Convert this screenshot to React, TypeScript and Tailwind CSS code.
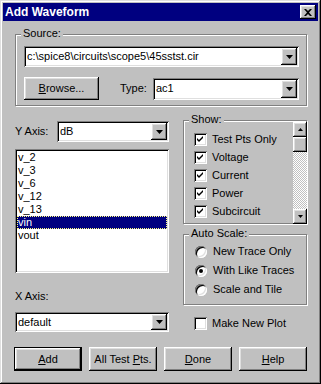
import React from "react";

const raised =
  "shadow-[inset_-1px_-1px_0_#000,inset_1px_1px_0_#fff,inset_-2px_-2px_0_#808080,inset_2px_2px_0_#dfdfdf]";
const sunken =
  "shadow-[inset_1px_1px_0_#808080,inset_-1px_-1px_0_#fff,inset_2px_2px_0_#000,inset_-2px_-2px_0_#dfdfdf]";
const etched = "border border-[#808080] shadow-[inset_1px_1px_0_#fff,1px_1px_0_#fff]";

function DownArrow() {
  return (
    <svg width="7" height="4" viewBox="0 0 7 4">
      <polygon points="0,0 7,0 3.5,4" fill="#000" />
    </svg>
  );
}

function Combo({ value, className }: { value: string; className: string }) {
  return (
    <div className={`flex items-stretch bg-white p-[2px] ${sunken} ${className}`}>
      <span className="flex-1 flex items-center pl-[1px] whitespace-nowrap overflow-hidden">{value}</span>
      <div className={`w-[16px] flex items-center justify-center bg-[#c0c0c0] ${raised}`}>
        <DownArrow />
      </div>
    </div>
  );
}

function Button({ children, isDefault }: { children: React.ReactNode; isDefault?: boolean }) {
  if (isDefault) {
    return (
      <div className="w-[68px] h-[24px] border border-black flex">
        <div className={`flex-1 flex items-center justify-center ${raised}`}>{children}</div>
      </div>
    );
  }
  return (
    <div className={`w-[68px] h-[24px] flex items-center justify-center ${raised}`}>{children}</div>
  );
}

function Check({ checked }: { checked: boolean }) {
  return (
    <div className={`w-[13px] h-[13px] bg-white flex items-center justify-center ${sunken}`}>
      {checked && (
        <svg width="7" height="7" viewBox="0 0 7 7">
          <path d="M0 2 L2 4 L6 0 L6 2 L2 6 L0 4 Z" fill="#000" />
        </svg>
      )}
    </div>
  );
}

function Radio({ checked }: { checked: boolean }) {
  return (
    <div className={`w-[12px] h-[12px] rounded-full bg-white flex items-center justify-center ${sunken}`}>
      {checked && <div className="w-[4px] h-[4px] rounded-full bg-black" />}
    </div>
  );
}

function Group({ label, className, children }: { label: string; className: string; children?: React.ReactNode }) {
  return (
    <div className={`relative ${etched} ${className}`}>
      <span className="absolute -top-[8px] left-[5px] px-[2px] bg-[#c0c0c0] leading-[13px]">{label}</span>
      {children}
    </div>
  );
}

const signals = ["v_2", "v_3", "v_6", "v_12", "v_13", "vin", "vout"];
const shows = ["Test Pts Only", "Voltage", "Current", "Power", "Subcircuit"];
const scales = ["New Trace Only", "With Like Traces", "Scale and Tile"];

export default function App() {
  return (
    <div
      className={`w-[321px] h-[384px] bg-[#c0c0c0] p-[3px] flex flex-col text-black text-[11px] font-['Liberation_Sans',Arial,sans-serif] shadow-[inset_-1px_-1px_0_#000,inset_1px_1px_0_#dfdfdf,inset_-2px_-2px_0_#808080,inset_2px_2px_0_#fff]`}
    >
      <div className="h-[18px] bg-[#000080] flex items-center justify-between pl-[2px] pr-[2px]">
        <span className="text-white font-bold text-[12px]">Add Waveform</span>
        <div className={`w-[16px] h-[14px] bg-[#c0c0c0] flex items-center justify-center ${raised}`}>
          <svg width="8" height="7" viewBox="0 0 8 7">
            <path d="M0 0 L2 0 L4 2 L6 0 L8 0 L5 3.5 L8 7 L6 7 L4 5 L2 7 L0 7 L3 3.5 Z" fill="#000" />
          </svg>
        </div>
      </div>

      <Group label="Source:" className="mt-[13px] ml-[12px] w-[292px] h-[72px] pt-[11px] pl-[8px]">
        <Combo value="c:\spice8\circuits\scope5\45sstst.cir" className="w-[275px] h-[21px]" />
        <div className="mt-[10px] w-[275px] flex items-center">
          <div className={`w-[75px] h-[23px] flex items-center justify-center ${raised}`}>
            <span>
              <u>B</u>rowse...
            </span>
          </div>
          <span className="ml-[21px]">Type:</span>
          <Combo value="ac1" className="ml-auto w-[146px] h-[22px]" />
        </div>
      </Group>

      <div className="flex items-start">
        <div className="ml-[12px] w-[154px] flex flex-col">
          <div className="mt-[15px] flex items-center justify-between">
            <span>Y Axis:</span>
            <Combo value="dB" className="w-[112px] h-[21px]" />
          </div>
          <div className={`mt-[7px] h-[124px] bg-white p-[2px] ${sunken}`}>
            {signals.map((s) => (
              <div
                key={s}
                className={`h-[13px] leading-[13px] pl-[1px] ${
                  s === "vin"
                    ? "bg-[#000080] text-white outline-1 outline-dotted outline-[#ffff80] -outline-offset-1"
                    : ""
                }`}
              >
                {s}
              </div>
            ))}
          </div>
          <div className="mt-[17px] h-[13px] leading-[13px]">X Axis:</div>
          <Combo value="default" className="mt-[9px] w-[154px] h-[20px]" />
        </div>

        <div className="ml-[14px] w-[124px] flex flex-col">
          <Group label="Show:" className="mt-[14px] h-[104px] pt-[9px] pl-[10px]">
            {shows.map((s) => (
              <div key={s} className="h-[18px] flex items-center gap-[5px]">
                <Check checked />
                <span>{s}</span>
              </div>
            ))}
            <div className="absolute top-[1px] -right-[1px] -bottom-[1px] w-[14px] flex flex-col">
              <div className={`h-[15px] bg-[#c0c0c0] flex items-center justify-center ${raised}`}>
                <svg width="5" height="3" viewBox="0 0 5 3">
                  <polygon points="0,3 5,3 2.5,0" fill="#000" />
                </svg>
              </div>
              <div className={`h-[15px] bg-[#c0c0c0] ${raised}`} />
              <div className="flex-1 bg-[repeating-conic-gradient(#c0c0c0_0%_25%,#fff_0%_50%)] bg-[length:2px_2px]" />
              <div className={`h-[15px] bg-[#c0c0c0] flex items-center justify-center ${raised}`}>
                <svg width="5" height="3" viewBox="0 0 5 3">
                  <polygon points="0,0 5,0 2.5,3" fill="#000" />
                </svg>
              </div>
            </div>
          </Group>

          <Group label="Auto Scale:" className="mt-[10px] h-[71px] pt-[7px] pl-[11px]">
            {scales.map((s, i) => (
              <div key={s} className="h-[19px] flex items-center gap-[6px]">
                <Radio checked={i === 1} />
                <span>{s}</span>
              </div>
            ))}
          </Group>

          <div className="mt-[12px] h-[13px] pl-[11px] flex items-center gap-[5px]">
            <Check checked={false} />
            <span>Make New Plot</span>
          </div>
        </div>
      </div>

      <div className="mt-[15px] ml-[11px] flex gap-[7px]">
        <Button isDefault>
          <span>
            <u>A</u>dd
          </span>
        </Button>
        <Button>
          <span>
            All Test <u>P</u>ts.
          </span>
        </Button>
        <Button>
          <span>
            <u>D</u>one
          </span>
        </Button>
        <Button>
          <span>
            <u>H</u>elp
          </span>
        </Button>
      </div>
    </div>
  );
}
